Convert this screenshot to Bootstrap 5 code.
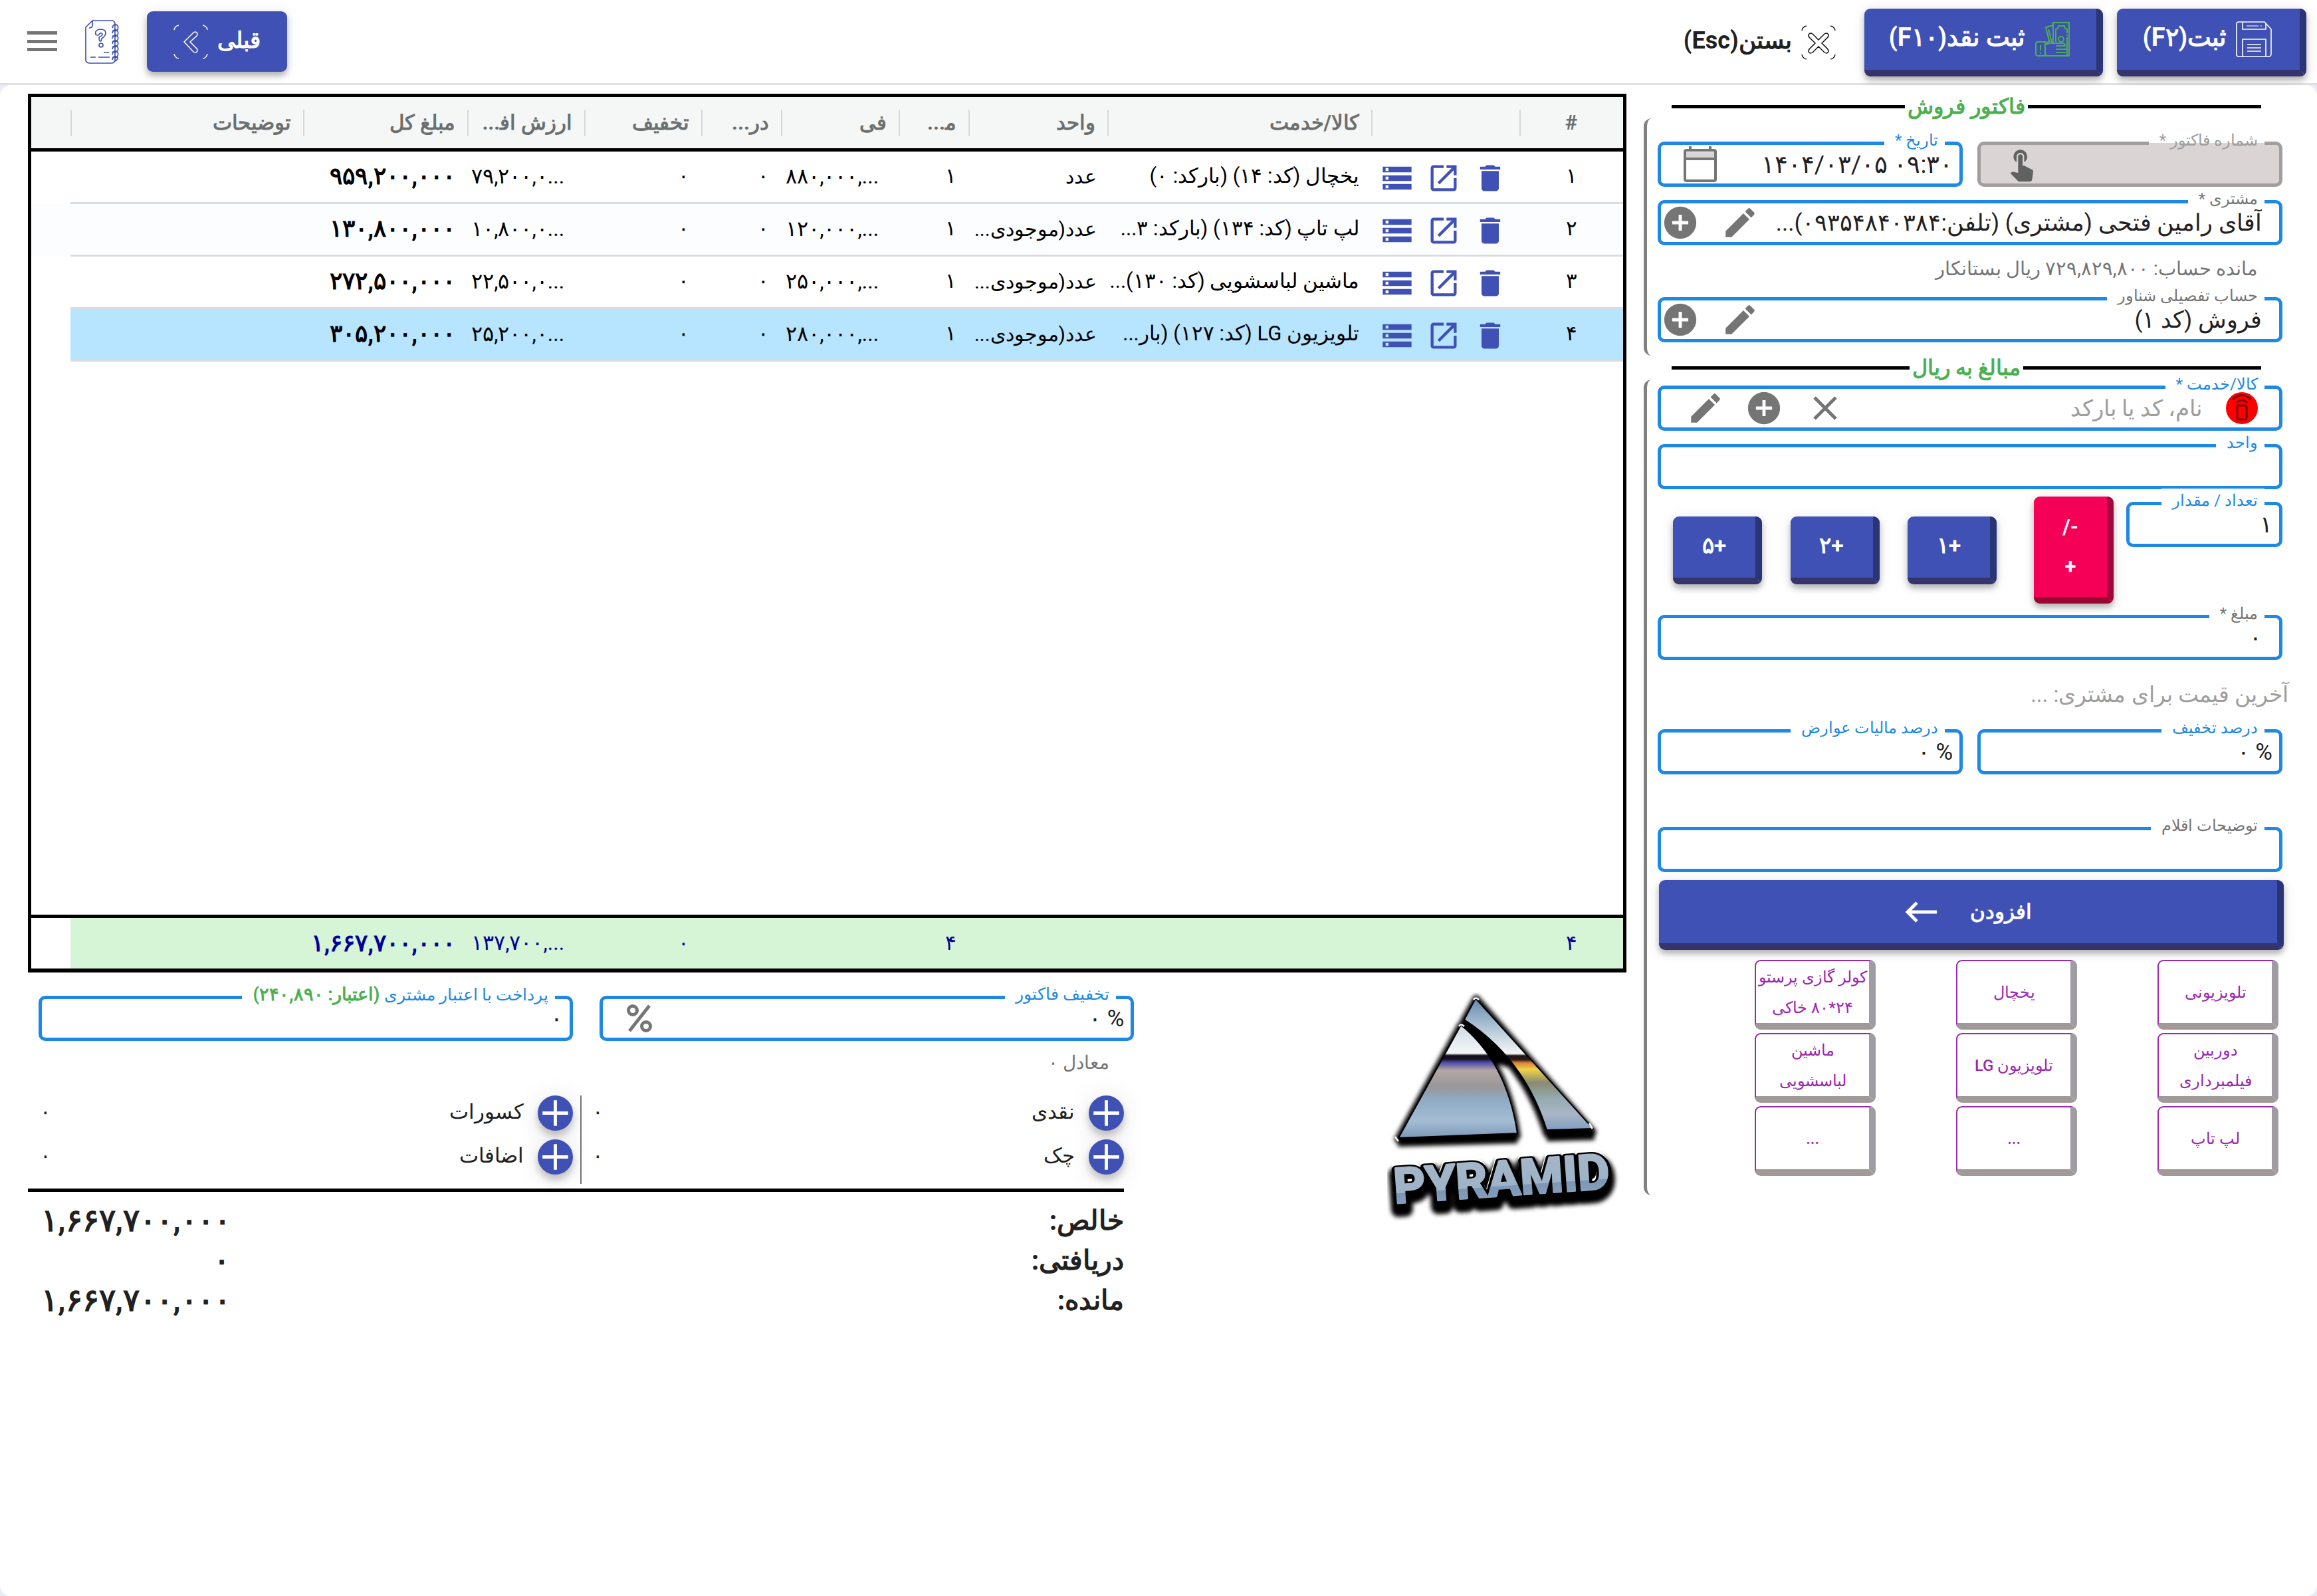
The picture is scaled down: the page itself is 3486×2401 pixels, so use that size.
<!DOCTYPE html>
<html lang="fa" dir="rtl">
<head>
<meta charset="utf-8">
<meta name="viewport" content="width=device-width, initial-scale=1">
<title>فاکتور فروش</title>
<link href="https://cdn.jsdelivr.net/npm/bootstrap@5.3.0/dist/css/bootstrap.min.css" rel="stylesheet">
<script src="https://cdn.jsdelivr.net/npm/bootstrap@5.3.0/dist/js/bootstrap.bundle.min.js" defer></script>
<style>
:root{--indigo:#3f51b5;--edge:#1e88e5;--soft:#757575;--green:#4caf50}
body{font-family:Roboto,"Noto Sans";font-size:34px;line-height:1.5;color:#212121;background:#e8eaf6;min-height:100vh}
svg{display:block;flex:none}
.topbar{height:128px;background:#fff;border-bottom:3px solid #e0e0e0;padding:0 16px 0 41px}
.topbar .start-side{align-self:flex-start;padding-top:13px;gap:21px}
.key{--bs-btn-color:#fff;--bs-btn-bg:var(--indigo);--bs-btn-hover-color:#fff;--bs-btn-hover-bg:#3949a3;--bs-btn-active-bg:#303f9f;--bs-btn-active-color:#fff;
  border:0 solid;border-right:10px solid #2b3477;border-bottom:10px solid #35346d;border-radius:9px;color:#fff;font-weight:700;line-height:48px;
  box-shadow:0 6px 8px rgba(0,0,0,.25),0 2px 20px rgba(0,0,0,.1)}
.topbar .btn span{padding-bottom:6px}
.topkey{height:102px;padding:0 42px 0 39px;gap:14px;font-size:38px}
.cashkey{padding:0 40px 0 37px}
.flatkey{height:102px;border:0;padding:0 22px;gap:14px;font-size:36px;font-weight:700;color:#212121}
.backkey{height:91px;border:0;padding:0 40px;gap:14px;font-size:34px}
.plainkey{border:0;background:none;padding:0;color:var(--soft)}
.sheet{background:#fff;border-radius:16px;min-height:calc(100vh - 128px)}
.entry{flex:0 0 calc(29% + 2px);padding-top:14px}
.caption{height:36px;margin:0 84px 0 42px;gap:4px;color:var(--green);font-size:32px;font-weight:700;line-height:36px}
.caption::before,.caption::after{content:"";height:5px;flex:1;background:#000}
.group{border-left:5px solid #808080;border-radius:12px 0 0 12px;padding:0 52px 0 16px}
.group-a{padding-top:35px;padding-bottom:20px}
.group-b{padding-top:9px;padding-bottom:29px}
.outlined{position:relative;height:68px;border:5px solid var(--edge);border-radius:10px;padding:0 10px;gap:10px;background:#fff}
.outlined.roomy{padding:0 26px 0 5px}
.outlined label{position:absolute;right:22px;top:-25px;height:36px;padding:0 10px 0 16px;background:#fff;font-size:24px;line-height:36px;color:var(--soft);white-space:nowrap}
.outlined label.lit{color:var(--edge)}
.outlined.frozen{background:#dad4d4;border-color:#a39e9e}
.outlined.frozen label{background:linear-gradient(#fff 22px,#dad4d4 22px);color:#9e9e9e}
.outlined input{position:relative;z-index:1;flex:1;min-width:0;width:100%;border:0;outline:0;background:none;padding:0;height:58px;font-size:35px;color:#212121;text-align:right}
.outlined input::placeholder{color:#9e9e9e;opacity:1;font-size:34px}
.outlined.date{padding-left:34px}
.outlined.date input{font-size:37px}
.scan{position:relative;z-index:1}
.hint{font-size:29px;line-height:70px;color:var(--soft);padding-right:37px;margin-bottom:8px}
.steps{padding:0 56px 0 23px}
.step{width:134px;height:102px;padding:0 0 5px;font-size:34px}
.flip{width:120px;height:161px;padding:0 34px;font-size:31px;line-height:60px;--bs-btn-bg:#f50057;--bs-btn-hover-bg:#d8004d;border-right-color:#a2063c;border-bottom-color:#990633}
.qty-row{padding-top:11px;margin-bottom:17px}
.qty-row .outlined{flex:1;margin-top:8px}
.qty-row .flip{margin-right:19px}
.qty-row .steps{flex:0 0 566px}
.last-price{font-size:33px;line-height:104px;height:104px;color:#9e9e9e;margin-right:-9px}
.addkey{height:105px;gap:50px;font-size:31px;margin-right:-2px}
.presets{display:grid;grid-template-columns:repeat(3,1fr);row-gap:5px;padding:0 6px 0 25px;margin-top:15px}
.preset{width:60%;height:105px;padding:0;background:#fff;color:#9c27b0;border:2px solid #9c27b0;border-right:10px solid #9f9da3;border-bottom:10px solid #a19997;border-radius:9px;font-size:24px;font-weight:500;line-height:46px;white-space:nowrap}
.work{flex:1;min-width:0;padding:13px 26px 0 42px}
.frame{border:5px solid #000;border-bottom-width:6px}
.lines{table-layout:fixed;width:100%;margin:0;color:#000;font-size:31px;border-collapse:separate;border-spacing:0}
.lines th,.lines td{padding:0 18px 0 0;white-space:nowrap;overflow:hidden;text-align:right;vertical-align:middle}
.lines th{height:82px;background:#f5f7f7;color:#6b6f6f;font-size:31px;border-bottom:5px solid #000}
.lines th>span{display:block;height:40px;line-height:40px;margin:0 -18px 0 0;padding-right:18px;border-left:2px solid #d5d8da}
.lines th:last-child>span{border:0}
.lines tbody td{height:79px;border-bottom:3px solid #dadcdf;padding-bottom:2px}
.lines tbody tr:nth-child(2) td{background:#fcfdfe}
.lines tbody tr.picked td{background:#b7e4ff}
.lines tbody td:last-child,.lines tbody tr.picked td:last-child,.lines tfoot td:last-child{background:#fff;border-bottom:0}
.lines .spacer td{height:832px;border:0}
.lines td{padding-right:18px}
.lines td:nth-child(4){font-size:30px;padding-right:16px}
.lines td.money{padding:0 30px 2px 0;direction:ltr;font-size:32px}
.lines td.total{font-weight:700;font-size:36px}
.lines td:first-child,.lines th:first-child>span{padding-right:69px}
.lines tfoot td{height:81px;border-top:5px solid #000;background:#d6f4d6;color:#00009c}
.actions{gap:18px;color:var(--indigo)}
.lines td.tools{padding:4px 6px 0 0}
.summary{flex:0 0 69.2%;padding-top:35px}
.pay{gap:40px;padding-left:16px}
.pay .outlined{flex:1}
.pay .outlined label{font-size:25px}
.pay .outlined label b{font-size:27px;color:var(--green)}
.equiv{font-size:28px;line-height:66px;height:82px;padding-right:37px;color:var(--soft)}
.adjust{padding:0 15px 0 18px}
.adjust>div{flex:1;gap:13px;height:133px;display:flex;flex-direction:column;font-size:31px;line-height:50px}
.adjust>div:first-child{border-left:2px solid #757575;padding-left:16px}
.adjust>div:last-child{flex:0 0 813px;padding-right:11px}
.adjust span{padding-bottom:3px}
.plus{width:53px;height:53px;padding:0;border:0;border-radius:50%;background:var(--indigo);color:#fff;box-shadow:0 8px 12px rgba(0,0,0,.22),0 4px 40px rgba(0,0,0,.1)}
.sums{border-top:5px solid #000;margin:7px 15px 0 0;padding:13px 0 0 20px;font-size:41px;font-weight:700}
.sums>div{height:60px;line-height:60px}
.sums dt{font-weight:700}
.sums dd{margin:0;min-width:284px;font-size:47px}
.brand{padding:30px 10px 0 0}
</style>
</head>
<body>
<svg width="0" height="0" class="position-absolute" aria-hidden="true">
  <symbol id="i-pencil" viewBox="0 0 24 24"><path fill="currentColor" d="M3 17.25V21h3.75L17.81 9.94l-3.75-3.75L3 17.25zM20.71 7.04a1 1 0 0 0 0-1.41l-2.34-2.34a1 1 0 0 0-1.41 0l-1.83 1.83 3.75 3.75 1.83-1.83z"/></symbol>
  <symbol id="i-add" viewBox="0 0 24 24"><path fill="currentColor" d="M12 2a10 10 0 1 0 0 20 10 10 0 0 0 0-20zm5 11h-4v4h-2v-4H7v-2h4V7h2v4h4v2z"/></symbol>
  <symbol id="i-trash" viewBox="0 0 24 24"><path fill="currentColor" d="M6 19a2 2 0 0 0 2 2h8a2 2 0 0 0 2-2V7H6v12zM19 4h-3.5l-1-1h-5l-1 1H5v2h14V4z"/></symbol>
  <symbol id="i-open" viewBox="0 0 24 24"><path fill="currentColor" d="M19 19H5V5h7V3H5a2 2 0 0 0-2 2v14a2 2 0 0 0 2 2h14c1.1 0 2-.9 2-2v-7h-2v7zM14 3v2h3.59l-9.83 9.83 1.41 1.41L19 6.41V10h2V3h-7z"/></symbol>
  <symbol id="i-store" viewBox="0 0 24 24"><path fill="currentColor" d="M2 20h20v-4H2v4zm2-3h2v2H4v-2zM2 4v4h20V4H2zm4 3H4V5h2v2zm-4 7h20v-4H2v4zm2-3h2v2H4v-2z"/></symbol>
  <symbol id="i-plus" viewBox="0 0 24 24"><path d="M12 4v16M4 12h16" stroke="currentColor" stroke-width="2" fill="none"/></symbol>
</svg>

<header class="topbar d-flex align-items-center justify-content-between">
  <div class="start-side d-flex">
    <button type="button" class="btn key topkey d-flex align-items-center">
      <svg width="54" height="54" viewBox="0 0 54 54" fill="none" stroke="#fff" stroke-width="1.6"><path d="M4 1h39l10 11v37q0 4-4 4H4q-3 0-3-3V4q0-3 3-3zM10 1v11h35V3M10 53V27h35v26M17 35h21M17 40h21M17 45h21"/><path d="M16 7h18M37 7h2" opacity=".7"/></svg>
      <span>ثبت(F۲)</span>
    </button>
    <button type="button" class="btn key topkey cashkey d-flex align-items-center">
      <svg width="52" height="52" viewBox="0 0 52 52" fill="none" stroke="#4caf50" stroke-width="2"><path d="M27 31V1h24v50H18q-3-1-3-4V33l7-5M22 32 16 8l11-3M25 31 20 11"/><path d="M1 33q0-3 3-3h11v21H4q-3 0-3-3zM8 35v8M8 46v2"/><path d="M31 30V11q4-1 4-5h9q0 4 4 5v6M48 19v2M48 23v27M15 34l7-2h19q4 0 4 4H31M31 41h16M31 46h15M34 51h10"/><circle cx="39" cy="26" r="4"/></svg>
      <span>ثبت نقد(F۱۰)</span>
    </button>
    <button type="button" class="btn flatkey d-flex align-items-center">
      <svg width="52" height="52" viewBox="0 0 52 52" fill="none" stroke="#111" stroke-width="1.5"><path d="M1 8q1-6 7-7M44 1q6 1 7 7M51 44q-1 6-7 7M8 51q-6-1-7-7"/><path d="m26 22 9-9q3-2 5 0t0 5l-9 9 9 9q2 3 0 5t-5 0l-9-9-9 9q-3 2-5 0t0-5l9-9-9-9q-2-3 0-5t5 0z"/></svg>
      <span>بستن(Esc)</span>
    </button>
  </div>
  <div class="d-flex align-items-center" style="gap:42px">
    <button type="button" class="btn key backkey d-flex align-items-center">
      <span>قبلی</span>
      <svg width="52" height="52" viewBox="0 0 52 52" fill="none" stroke="#fff" stroke-width="1.5"><path d="M1 8q1-6 7-7M44 1q6 1 7 7M51 44q-1 6-7 7M8 51q-6-1-7-7"/><path d="M16 26 30 12q3-2 5 0t0 5l-10 9 10 10q2 3 0 5t-5 0z"/></svg>
    </button>
    <button type="button" class="plainkey" aria-label="راهنما">
      <svg width="51" height="66" viewBox="0 0 51 66" fill="none" stroke="#3f51b5" stroke-width="1.7"><path d="M11 1h30q4 1 4 5v54q-1 5-5 5H6q-5-1-5-5V11zM11 1v7q0 4-5 4"/><path d="M16 22q-2-7 7-8 8 0 8 6 0 4-6 8 0 4-2 4t-2-6q6-3 5-5-3-3-5 1-1 2-5 0z"/><circle cx="24" cy="38" r="3"/><path d="M8 56h8M20 56h17M28 49h8"/><path d="M41 12q1-6 6-5 5 3 1 9-3 1-7 0M41 20q1-6 6-5 5 3 1 9-3 1-7 0M41 28q1-6 6-5 5 3 1 9-3 1-7 0M41 36q1-6 6-5 5 3 1 9-3 1-7 0M41 44q1-6 6-5 5 3 1 9-3 1-7 0M41 52q1-6 6-5 5 3 1 9-3 1-7 0M41 60q1-6 6-5 5 3-2 7"/></svg>
    </button>
    <button type="button" class="plainkey" aria-label="منو">
      <svg width="45" height="31" viewBox="0 0 45 31"><path d="M0 0h45v5H0zM0 13h45v5H0zM0 25h45v5H0z" fill="#757575"/></svg>
    </button>
  </div>
</header>

<main class="sheet d-flex align-items-start">
  <aside class="entry">
    <h2 class="caption d-flex align-items-center">فاکتور فروش</h2>
    <div class="group group-a">
      <div class="d-flex" style="gap:22px">
        <div class="outlined frozen d-flex align-items-center flex-fill w-50">
          <label for="f-no">شماره فاکتور *</label>
          <input id="f-no" disabled>
          <svg width="48" height="54" viewBox="2 2 21 21" style="margin-left:28px"><path fill="#616161" d="M9 11.24V7.5a2.5 2.5 0 0 1 5 0v3.74A4.5 4.5 0 1 0 9 11.24zm9.84 4.63-4.54-2.26c-.17-.07-.35-.11-.54-.11H13v-6a1.5 1.5 0 0 0-3 0v10.74l-3.43-.72c-.3-.06-.6.02-.82.25l-.79.8 4.94 4.94c.27.27.65.49 1.06.49h6.79c.75 0 1.33-.55 1.44-1.28l.75-5.27c.12-.7-.27-1.3-1.1-1.58z"/></svg>
        </div>
        <div class="outlined date d-flex align-items-center flex-fill w-50">
          <label for="f-date" class="lit">تاریخ *</label>
          <input id="f-date" dir="ltr" value="۱۴۰۴/۰۳/۰۵ ۰۹:۳۰">
          <svg width="50" height="54" viewBox="0 0 50 54"><path fill="#d6d6d6" d="M4 9h42v9H4z"/><path fill="none" stroke="#757575" stroke-width="4" d="M2 8q0-2 3-2h40q3 0 3 2v42q0 2-3 2H5q-3 0-3-2zM2 19h46M10 0v6M40 0v6"/></svg>
        </div>
      </div>
      <div class="outlined roomy d-flex align-items-center" style="margin-top:20px">
        <label for="f-cust">مشتری *</label>
        <input id="f-cust" value="آقای رامین فتحی (مشتری) (تلفن:۰۹۳۵۴۸۴۰۳۸۴)...">
        <svg width="58" height="58" color="#757575" style="margin-left:22px"><use href="#i-pencil"/></svg>
        <svg width="58" height="58" color="#757575" style="margin-left:-5px"><use href="#i-add"/></svg>
      </div>
      <div class="hint">مانده حساب: ۷۲۹,۸۲۹,۸۰۰ ریال بستانکار</div>
      <div class="outlined roomy d-flex align-items-center">
        <label for="f-acc">حساب تفصیلی شناور</label>
        <input id="f-acc" value="فروش (کد ۱)">
        <svg width="58" height="58" color="#757575" style="margin-left:22px"><use href="#i-pencil"/></svg>
        <svg width="58" height="58" color="#757575" style="margin-left:-5px"><use href="#i-add"/></svg>
      </div>
    </div>
    <h2 class="caption d-flex align-items-center">مبالغ به ریال</h2>
    <div class="group group-b">
      <div class="outlined roomy d-flex align-items-center" style="padding-right:32px">
        <label for="f-item" class="lit">کالا/خدمت *</label>
        <svg class="scan" width="48" height="48" viewBox="0 0 48 48" fill="none" stroke="#7a0000" stroke-width="3"><circle cx="24" cy="24" r="24" fill="#f00" stroke="none"/><rect x="17" y="20" width="14" height="21" rx="2"/><path d="M16 16q8-8 16 0M10 11q14-13 28 0"/></svg>
        <input id="f-item" placeholder="نام، کد یا بارکد" style="padding-right:26px">
        <svg width="38" height="36" viewBox="0 0 38 36" stroke="#757575" stroke-width="5"><path d="m3 2 32 32M35 2 3 34"/></svg>
        <svg width="58" height="58" color="#757575" style="margin-right:34px"><use href="#i-add"/></svg>
        <svg width="58" height="58" color="#757575" style="margin:0 20px 0 33px"><use href="#i-pencil"/></svg>
      </div>
      <div class="outlined d-flex" style="margin-top:20px">
        <label for="f-unit" class="lit">واحد</label><input id="f-unit">
      </div>
      <div class="qty-row d-flex align-items-start">
        <div class="outlined d-flex"><label for="f-qty" class="lit">تعداد / مقدار</label><input id="f-qty" value="۱"></div>
        <button type="button" class="btn key flip">-/ +</button>
        <div class="steps d-flex justify-content-between align-self-center">
          <button type="button" class="btn key step">+۱</button>
          <button type="button" class="btn key step">+۲</button>
          <button type="button" class="btn key step">+۵</button>
        </div>
      </div>
      <div class="outlined roomy d-flex"><label for="f-amt">مبلغ *</label><input id="f-amt" value="۰"></div>
      <div class="last-price">آخرین قیمت برای مشتری: ...</div>
      <div class="d-flex" style="gap:22px">
        <div class="outlined d-flex w-50"><label for="f-dis" class="lit">درصد تخفیف</label><input id="f-dis" value="% ۰"></div>
        <div class="outlined d-flex w-50"><label for="f-tax" class="lit">درصد مالیات عوارض</label><input id="f-tax" value="% ۰"></div>
      </div>
      <div class="outlined d-flex" style="margin:79px 0 12px"><label for="f-note">توضیحات اقلام</label><input id="f-note"></div>
      <button type="button" class="btn key addkey w-100 d-flex align-items-center justify-content-center">
        <span>افزودن</span>
        <svg width="48" height="32" viewBox="0 0 48 32" fill="none" stroke="#fff" stroke-width="5"><path d="M48 16H4M18 2 4 16l14 14"/></svg>
      </button>
      <div class="presets">
        <button type="button" class="btn preset">تلویزیونی</button>
        <button type="button" class="btn preset">یخچال</button>
        <button type="button" class="btn preset">کولر گازی پرستو<br>۲۴*۸۰ خاکی</button>
        <button type="button" class="btn preset">دوربین<br>فیلمبرداری</button>
        <button type="button" class="btn preset">تلویزیون LG</button>
        <button type="button" class="btn preset">ماشین<br>لباسشویی</button>
        <button type="button" class="btn preset">لپ تاپ</button>
        <button type="button" class="btn preset">...</button>
        <button type="button" class="btn preset">...</button>
      </div>
    </div>
  </aside>

  <section class="work">
    <div class="frame">
      <table class="lines">
        <colgroup><col style="width:156px"><col style="width:223px"><col style="width:397px"><col style="width:209px"><col style="width:105px"><col style="width:177px"><col style="width:120px"><col style="width:176px"><col style="width:176px"><col style="width:247px"><col><col style="width:59px"></colgroup>
        <thead><tr><th><span>#</span></th><th><span></span></th><th><span>کالا/خدمت</span></th><th><span>واحد</span></th><th><span>م&zwj;...</span></th><th><span>فی</span></th><th><span>در...</span></th><th><span>تخفیف</span></th><th><span>ارزش اف&zwj;...</span></th><th><span>مبلغ کل</span></th><th><span>توضیحات</span></th><th><span></span></th></tr></thead>
        <tbody>
          <tr><td>۱</td><td class="tools"><div class="actions d-flex justify-content-center"><svg width="52" height="52"><use href="#i-trash"/></svg><svg width="52" height="52"><use href="#i-open"/></svg><svg width="52" height="52"><use href="#i-store"/></svg></div></td><td>یخچال (کد: ۱۴) (بارکد: ۰)</td><td>عدد</td><td>۱</td><td class="money">۸۸۰,۰۰۰,...</td><td>۰</td><td>۰</td><td class="money">۷۹,۲۰۰,۰...</td><td class="total">۹۵۹,۲۰۰,۰۰۰</td><td></td><td></td></tr>
          <tr><td>۲</td><td class="tools"><div class="actions d-flex justify-content-center"><svg width="52" height="52"><use href="#i-trash"/></svg><svg width="52" height="52"><use href="#i-open"/></svg><svg width="52" height="52"><use href="#i-store"/></svg></div></td><td>لپ تاپ (کد: ۱۳۴) (بارکد: ۳...</td><td>عدد(موجودی...</td><td>۱</td><td class="money">۱۲۰,۰۰۰,...</td><td>۰</td><td>۰</td><td class="money">۱۰,۸۰۰,۰...</td><td class="total">۱۳۰,۸۰۰,۰۰۰</td><td></td><td></td></tr>
          <tr><td>۳</td><td class="tools"><div class="actions d-flex justify-content-center"><svg width="52" height="52"><use href="#i-trash"/></svg><svg width="52" height="52"><use href="#i-open"/></svg><svg width="52" height="52"><use href="#i-store"/></svg></div></td><td>ماشین لباسشویی (کد: ۱۳۰)...</td><td>عدد(موجودی...</td><td>۱</td><td class="money">۲۵۰,۰۰۰,...</td><td>۰</td><td>۰</td><td class="money">۲۲,۵۰۰,۰...</td><td class="total">۲۷۲,۵۰۰,۰۰۰</td><td></td><td></td></tr>
          <tr class="picked"><td>۴</td><td class="tools"><div class="actions d-flex justify-content-center"><svg width="52" height="52"><use href="#i-trash"/></svg><svg width="52" height="52"><use href="#i-open"/></svg><svg width="52" height="52"><use href="#i-store"/></svg></div></td><td>تلویزیون LG (کد: ۱۲۷) (بار...</td><td>عدد(موجودی...</td><td>۱</td><td class="money">۲۸۰,۰۰۰,...</td><td>۰</td><td>۰</td><td class="money">۲۵,۲۰۰,۰...</td><td class="total">۳۰۵,۲۰۰,۰۰۰</td><td></td><td></td></tr>
          <tr class="spacer"><td colspan="12"></td></tr>
        </tbody>
        <tfoot><tr><td>۴</td><td></td><td></td><td></td><td>۴</td><td></td><td></td><td>۰</td><td class="money">۱۳۷,۷۰۰,...</td><td class="total">۱,۶۶۷,۷۰۰,۰۰۰</td><td></td><td></td></tr></tfoot>
      </table>
    </div>

    <div class="d-flex align-items-start justify-content-between">
      <div class="brand">
        <svg width="350" height="350" viewBox="0 0 350 350" role="img" aria-label="PYRAMID">
          <defs>
            <linearGradient id="left" x1="0" y1="0" x2="0" y2="1"><stop offset="0" stop-color="#cfdbe6"/><stop offset=".25" stop-color="#f4f6f6"/><stop offset=".27" stop-color="#14121c"/><stop offset=".3" stop-color="#14121c"/><stop offset=".33" stop-color="#4a49a8"/><stop offset=".4" stop-color="#b3a6a3"/><stop offset=".55" stop-color="#98979a"/><stop offset=".66" stop-color="#8fabc4"/><stop offset=".85" stop-color="#a4bdd4"/><stop offset="1" stop-color="#7b97b6"/></linearGradient>
            <linearGradient id="right" x1="0" y1="0" x2="0" y2="1"><stop offset="0" stop-color="#6389b0"/><stop offset=".2" stop-color="#a9bfd2"/><stop offset=".42" stop-color="#f4f6f6"/><stop offset=".435" stop-color="#1d1518"/><stop offset=".465" stop-color="#2a1818"/><stop offset=".49" stop-color="#d9853a"/><stop offset=".54" stop-color="#f0d446"/><stop offset=".64" stop-color="#8a8a72"/><stop offset=".76" stop-color="#94aab0"/><stop offset=".88" stop-color="#a9b6c8"/><stop offset="1" stop-color="#7f9dbf"/></linearGradient>
            <linearGradient id="word" x1="0" y1="0" x2="0" y2="1"><stop offset="0" stop-color="#a8b8c8"/><stop offset=".62" stop-color="#9db3c8"/><stop offset=".63" stop-color="#7d96b5"/><stop offset="1" stop-color="#8ba6c4"/></linearGradient>
            <filter id="glow" x="-10%" y="-20%" width="120%" height="145%"><feGaussianBlur stdDeviation="3"/></filter>
          </defs>
          <g transform="translate(-6 -3)">
            <g filter="url(#glow)" fill="#000" stroke="#000" stroke-width="10" stroke-linejoin="round">
              <path d="M117 52 22 224l180-5Q186 108 117 52zM140 12l-19 34q90 60 125 170l70-3z"/>
              <path d="M119 50q30 30 50 60l20 6q-24-50-68-76z" stroke="none"/>
              <path d="M22 228l180-5M246 220l72-2" stroke-width="14"/>
            </g>
            <path d="M117 52Q186 108 202 215L23 222z" fill="url(#left)" stroke="#000" stroke-width="2"/>
            <path d="M139 12l-17 32q90 58 124 166l70-2z" fill="url(#right)" stroke="#000" stroke-width="2"/>
            <path d="M18 220l5 7M114 54q3-5 8 0M136 14q3-5 8 0M310 200l5 8" stroke="#fff" stroke-width="2.5" fill="none"/>
          </g>
          <g transform="rotate(-4 172 280)" font-family="Roboto,sans-serif" font-weight="700" font-size="74" text-anchor="middle" stroke-linejoin="round">
            <text x="172" y="316" fill="#000" stroke="#000" stroke-width="22" filter="url(#glow)">PYRAMID</text>
            <text x="171" y="303" fill="#fff" stroke="#fff" stroke-width="9">PYRAMID</text>
            <text x="172" y="308" fill="#000" stroke="#000" stroke-width="12">PYRAMID</text>
            <text x="172" y="306" fill="url(#word)" stroke="url(#word)" stroke-width="3">PYRAMID</text>
          </g>
        </svg>
      </div>
      <div class="summary">
        <div class="pay d-flex">
          <div class="outlined d-flex align-items-center"><label for="f-disc" class="lit">تخفیف فاکتور</label><input id="f-disc" value="% ۰">
            <svg width="38" height="42" viewBox="0 0 38 42" fill="none" stroke="#757575" stroke-width="5" style="margin-left:26px"><circle cx="9" cy="9" r="6.5"/><circle cx="29" cy="33" r="6.5"/><path d="M34 2 4 40"/></svg></div>
          <div class="outlined d-flex"><label for="f-cred" class="lit">پرداخت با اعتبار مشتری <b>(اعتبار: ۲۴۰,۸۹۰)</b></label><input id="f-cred" value="۰"></div>
        </div>
        <div class="equiv">معادل ۰</div>
        <div class="adjust d-flex">
          <div>
            <div class="d-flex align-items-center" style="gap:21px"><button type="button" class="plus" aria-label="افزودن نقدی"><svg width="53" height="53" viewBox="1 1 22 22"><use href="#i-plus" width="24" height="24"/></svg></button><span class="flex-grow-1">نقدی</span><span>۰</span></div>
            <div class="d-flex align-items-center" style="gap:21px"><button type="button" class="plus" aria-label="افزودن چک"><svg width="53" height="53" viewBox="1 1 22 22"><use href="#i-plus" width="24" height="24"/></svg></button><span class="flex-grow-1">چک</span><span>۰</span></div>
          </div>
          <div>
            <div class="d-flex align-items-center" style="gap:21px"><button type="button" class="plus" aria-label="افزودن کسورات"><svg width="53" height="53" viewBox="1 1 22 22"><use href="#i-plus" width="24" height="24"/></svg></button><span class="flex-grow-1">کسورات</span><span>۰</span></div>
            <div class="d-flex align-items-center" style="gap:21px"><button type="button" class="plus" aria-label="افزودن اضافات"><svg width="53" height="53" viewBox="1 1 22 22"><use href="#i-plus" width="24" height="24"/></svg></button><span class="flex-grow-1">اضافات</span><span>۰</span></div>
          </div>
        </div>
        <dl class="sums">
          <div class="d-flex justify-content-between"><dt>خالص:</dt><dd>۱,۶۶۷,۷۰۰,۰۰۰</dd></div>
          <div class="d-flex justify-content-between"><dt>دریافتی:</dt><dd>۰</dd></div>
          <div class="d-flex justify-content-between"><dt>مانده:</dt><dd>۱,۶۶۷,۷۰۰,۰۰۰</dd></div>
        </dl>
      </div>
    </div>
  </section>
</main>
</body>
</html>
